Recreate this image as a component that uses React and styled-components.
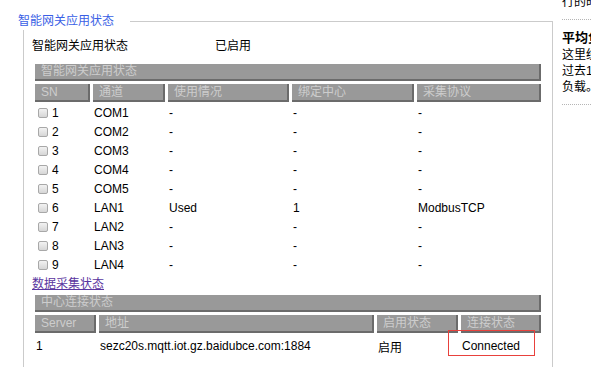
import React from 'react';
import styled, { createGlobalStyle } from 'styled-components';

const GlobalStyle = createGlobalStyle`
  body {
    margin: 0;
    overflow: hidden;
    background: #fff;
    color: #000;
    font-family: "Liberation Sans", "Noto Sans CJK SC", sans-serif;
    font-size: 12px;
  }
  * {
    box-sizing: border-box;
  }
`;

const channelCols = ['SN', '通道', '使用情况', '绑定中心', '采集协议'];
const channels = [
  { sn: 1, name: 'COM1', usage: '-', center: '-', proto: '-' },
  { sn: 2, name: 'COM2', usage: '-', center: '-', proto: '-' },
  { sn: 3, name: 'COM3', usage: '-', center: '-', proto: '-' },
  { sn: 4, name: 'COM4', usage: '-', center: '-', proto: '-' },
  { sn: 5, name: 'COM5', usage: '-', center: '-', proto: '-' },
  { sn: 6, name: 'LAN1', usage: 'Used', center: '1', proto: 'ModbusTCP' },
  { sn: 7, name: 'LAN2', usage: '-', center: '-', proto: '-' },
  { sn: 8, name: 'LAN3', usage: '-', center: '-', proto: '-' },
  { sn: 9, name: 'LAN4', usage: '-', center: '-', proto: '-' },
];

const serverCols = ['Server', '地址', '启用状态', '连接状态'];

function App() {
  return (
    <>
      <GlobalStyle />
      <Page>
        <Main>
          <TitleRow>
            <Title>智能网关应用状态</Title>
            <TitleLine />
          </TitleRow>
          <Box>
            <StatusRow>
              <StatusLabel>智能网关应用状态</StatusLabel>
              <span>已启用</span>
            </StatusRow>

            <Grid $cols="55px 72px 121px 122px 124px" $mt={7}>
              <Bar>智能网关应用状态</Bar>
              {channelCols.map(c => (
                <Head key={c}>{c}</Head>
              ))}
              {channels.map(row => (
                <React.Fragment key={row.sn}>
                  <Cell $h={16}>
                    <Check type="checkbox" />
                    {row.sn}
                  </Cell>
                  <Cell $h={16}>{row.name}</Cell>
                  <Cell $h={16}>{row.usage}</Cell>
                  <Cell $h={16}>{row.center}</Cell>
                  <Cell $h={16}>{row.proto}</Cell>
                </React.Fragment>
              ))}
            </Grid>

            <LinkRow>
              <a href="#collect">数据采集状态</a>
            </LinkRow>

            <Grid $cols="61px 275px 81px 80px">
              <Bar>中心连接状态</Bar>
              {serverCols.map(c => (
                <Head key={c}>{c}</Head>
              ))}
              <Cell $h={20}>1</Cell>
              <Cell $h={20}>sezc20s.mqtt.iot.gz.baidubce.com:1884</Cell>
              <Cell $h={20}>启用</Cell>
              <Cell $h={20}>
                Connected
                <Highlight />
              </Cell>
            </Grid>
          </Box>
        </Main>

        <Sidebar>
          <HelpBlock>行的时间。</HelpBlock>
          <HelpBlock>
            <HelpTitle>平均负载</HelpTitle>
            这里统计的是系统在
            <br />
            过去1、5、15分钟内的平均
            <br />
            负载。
          </HelpBlock>
        </Sidebar>
      </Page>
    </>
  );
}

export default App;

const Page = styled.div`
  display: flex;
  align-items: flex-start;
`;

const Main = styled.div`
  flex-shrink: 0;
  width: 553px;
`;

const TitleRow = styled.div`
  display: flex;
  align-items: center;
  height: 17px;
  margin-top: 13px;
  padding-left: 18px;
`;

const Title = styled.span`
  color: #3a5fe5;
  font-size: 12px;
  line-height: 17px;
`;

const TitleLine = styled.div`
  flex: 1;
  align-self: flex-end;
  height: 9px;
  margin-left: 16px;
  border-top: 1px solid #cbcbcb;
  border-right: 1px solid #cbcbcb;
`;

const Box = styled.div`
  margin-left: 23px;
  padding: 8px 7px 30px 8px;
  border-left: 1px solid #cbcbcb;
  border-right: 1px solid #cbcbcb;
`;

const StatusRow = styled.div`
  display: flex;
  line-height: 16px;
`;

const StatusLabel = styled.span`
  width: 183px;
`;

const Grid = styled.div`
  display: grid;
  grid-template-columns: ${p => p.$cols};
  gap: 3px;
  padding: 3px;
  margin-top: ${p => p.$mt || 0}px;
`;

const Bar = styled.div`
  grid-column: 1 / -1;
  height: 17px;
  line-height: 15px;
  padding-left: 6px;
  background: #999999;
  color: #cdcdcd;
  border-right: 2px solid #6b6b6b;
  border-bottom: 2px solid #6b6b6b;
`;

const Head = styled.div`
  height: 18px;
  line-height: 16px;
  padding-left: 6px;
  background: #999999;
  color: #cdcdcd;
  border-right: 2px solid #6b6b6b;
  border-bottom: 2px solid #6b6b6b;
  white-space: nowrap;
  overflow: hidden;
`;

const Cell = styled.div`
  position: relative;
  display: flex;
  align-items: center;
  height: ${p => p.$h}px;
  padding-left: 1px;
  white-space: nowrap;
`;

const Check = styled.input`
  appearance: none;
  width: 10px;
  height: 10px;
  margin: 0 4px 0 2px;
  border: 1px solid #a8a8a8;
  border-radius: 2px;
  background: linear-gradient(#f2f2f2, #d6d6d6);
`;

const Highlight = styled.span`
  position: absolute;
  left: -13px;
  top: -6px;
  width: 87px;
  height: 26px;
  border: 1px solid #e8413c;
`;

const LinkRow = styled.div`
  line-height: 15px;
  margin-top: 1px;

  a {
    color: #5a35a0;
    text-decoration: underline;
  }
`;

const Sidebar = styled.div`
  flex-shrink: 0;
  width: 200px;
  margin-top: -6px;
  padding-left: 9px;
`;

const HelpBlock = styled.div`
  line-height: 16px;
  padding-bottom: 9px;
  border-bottom: 1px dotted #b5b5b5;

  & + & {
    padding-top: 9px;
  }
`;

const HelpTitle = styled.div`
  font-size: 13px;
  font-weight: bold;
  line-height: 18px;
`;
